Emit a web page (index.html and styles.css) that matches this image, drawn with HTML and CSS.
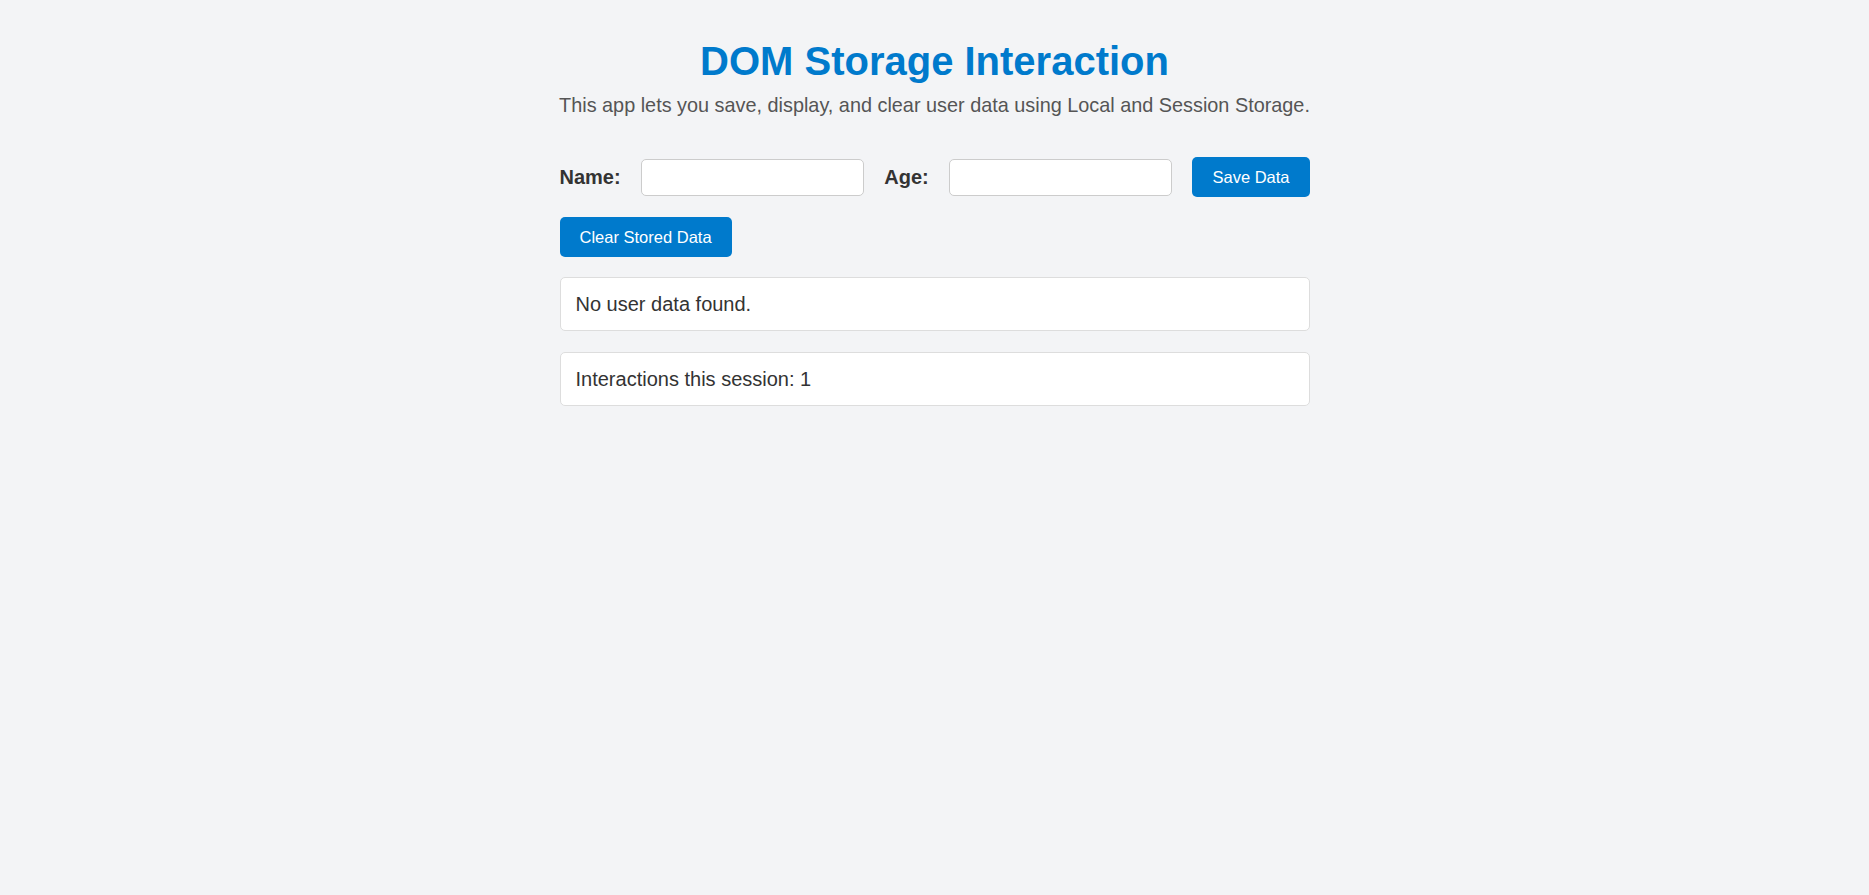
FILE: index.html
```html
<!DOCTYPE html>
<html lang="en">
<head>
<meta charset="utf-8">
<title>DOM Storage Interaction</title>
<link rel="stylesheet" href="styles.css">
</head>
<body>
<main class="container">
  <h1 class="title">DOM Storage Interaction</h1>
  <p class="subtitle">This app lets you save, display, and clear user data using Local and Session Storage.</p>
  <form class="form-row">
    <label class="label" for="name">Name:</label>
    <input class="input" id="name" type="text">
    <label class="label" for="age">Age:</label>
    <input class="input" id="age" type="number">
    <button class="btn" type="button">Save Data</button>
  </form>
  <div class="actions">
    <button class="btn" type="button">Clear Stored Data</button>
  </div>
  <div class="box box-first">No user data found.</div>
  <div class="box box-second">Interactions this session: 1</div>
</main>
</body>
</html>
```

FILE: styles.css
```css
html, body {
  margin: 0;
  padding: 0;
}
body {
  background: #f3f4f6;
  font-family: "Liberation Sans", Arial, sans-serif;
  color: #333;
}
.container {
  width: 750px;
  margin: 0 auto;
  padding-top: 38px;
}
.title {
  margin: 0 0 10px;
  text-align: center;
  font-size: 40px;
  line-height: 46px;
  font-weight: bold;
  color: #007acc;
}
.subtitle {
  margin: 0 -10px 40px;
  text-align: center;
  font-size: 19.85px;
  line-height: 23px;
  color: #555;
}
.form-row {
  display: flex;
  align-items: center;
  gap: 20px;
  margin: 0;
}
.label {
  font-weight: bold;
  font-size: 20px;
  color: #333;
}
.input {
  flex: 1;
  min-width: 0;
  height: 37px;
  box-sizing: border-box;
  border: 1px solid #ccc;
  border-radius: 5px;
  background: #fff;
  padding: 8px;
  font-size: 16px;
  font-family: inherit;
}
.btn {
  height: 40px;
  padding: 0 20px;
  border: none;
  border-radius: 5px;
  background: #007acc;
  color: #fff;
  font-family: inherit;
  font-size: 16.5px;
  cursor: pointer;
}
.actions {
  margin-top: 20px;
}
.box {
  background: #fff;
  border: 1px solid #ddd;
  border-radius: 5px;
  padding: 15px;
  font-size: 20px;
  line-height: 22px;
  color: #333;
}
.box-first {
  margin-top: 20px;
}
.box-second {
  margin-top: 21px;
}
```
